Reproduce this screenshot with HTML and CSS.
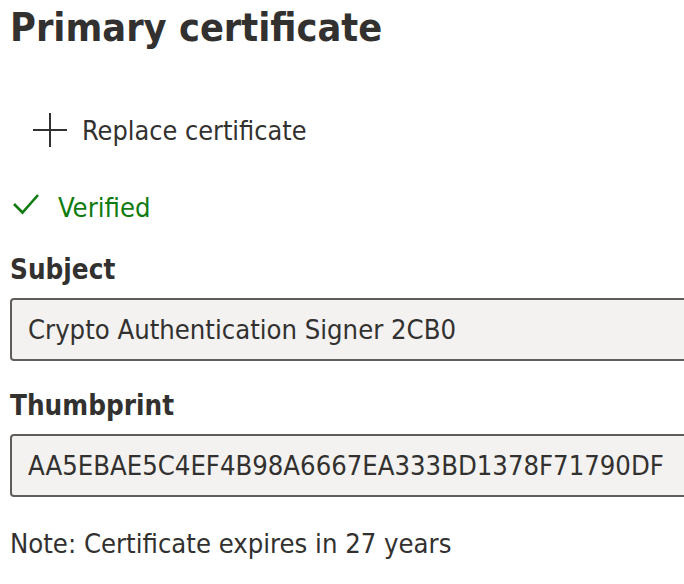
FILE: index.html
```html
<!DOCTYPE html>
<html lang="en">
<head>
<meta charset="utf-8">
<link rel="stylesheet" href="styles.css">
</head>
<body>
<div class="page">
  <h1 class="title">Primary certificate</h1>
  <div class="action">
    <svg class="plus" width="34" height="34" viewBox="0 0 34 34" aria-hidden="true">
      <path d="M17 0V34M0 17H34" stroke="#323130" stroke-width="2" fill="none"/>
    </svg>
    <span class="action-label">Replace certificate</span>
  </div>
  <div class="status">
    <svg class="check" width="26" height="28" viewBox="0 0 26 28" aria-hidden="true">
      <path d="M1 11L9.5 19.5L25 2" stroke="#107c10" stroke-width="2.6" fill="none" stroke-linejoin="miter"/>
    </svg>
    <span class="status-label">Verified</span>
  </div>
  <div class="field field-first">
    <div class="label">Subject</div>
    <div class="box">Crypto Authentication Signer 2CB0</div>
  </div>
  <div class="field">
    <div class="label">Thumbprint</div>
    <div class="box">AA5EBAE5C4EF4B98A6667EA333BD1378F71790DF</div>
  </div>
  <p class="note">Note: Certificate expires in 27 years</p>
</div>
</body>
</html>
```
FILE: styles.css
```css
html, body {
  margin: 0;
  padding: 0;
  background: #ffffff;
  overflow: hidden;
}
.page {
  padding-left: 10px;
  font-family: "DejaVu Sans Condensed", "DejaVu Sans", sans-serif;
  font-stretch: condensed;
  color: #323130;
  font-size: 27.2px;
}
.title {
  margin: 0;
  font-size: 39.3px;
  font-weight: 700;
  line-height: 56px;
  color: #323130;
}
.action {
  margin-top: 52px;
  height: 44px;
  display: flex;
  align-items: center;
  padding-left: 23px;
  gap: 15px;
}
.action-label {
  font-size: 26.8px;
}
.plus {
  display: block;
  flex: none;
}
.status {
  margin-top: 39px;
  height: 32px;
  display: flex;
  align-items: center;
  padding-left: 3px;
  gap: 19px;
  color: #107c10;
}
.check {
  display: block;
  flex: none;
}
.field {
  margin-top: 28px;
}
.field-first {
  margin-top: 30px;
}
.label {
  font-weight: 700;
  line-height: 34px;
  font-size: 27.6px;
}
.box {
  margin-top: 11px;
  width: 720px;
  height: 59px;
  line-height: 59px;
  padding: 0 16px;
  border: 2px solid #605e5c;
  border-radius: 4px;
  background: #f3f2f1;
  white-space: nowrap;
}
.note {
  margin: 30px 0 0;
  line-height: 34px;
}
```
